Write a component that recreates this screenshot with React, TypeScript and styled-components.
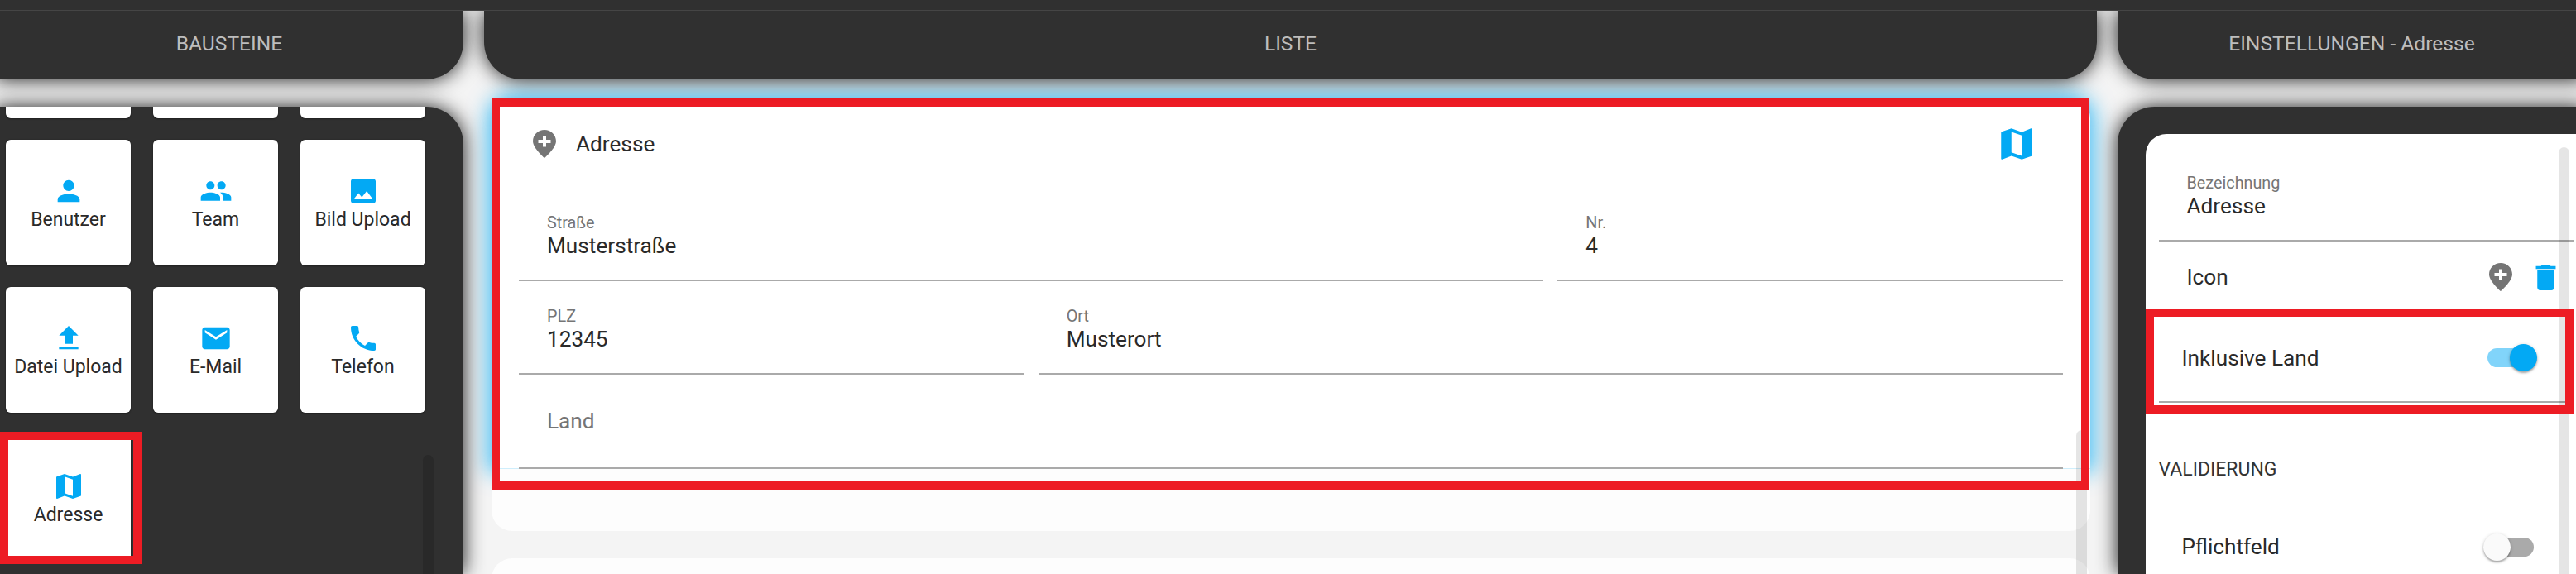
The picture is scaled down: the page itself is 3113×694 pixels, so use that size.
import React from "react";
import styled, { createGlobalStyle } from "styled-components";

const Global = createGlobalStyle`
  html, body { margin: 0; padding: 0; background: #f4f4f4; }
  body { font-family: Roboto, "Liberation Sans", sans-serif; font-size: 26.2px; font-weight: 400; color: #2a2a2a; }
  * { box-sizing: border-box; }
`;

const PATHS = {
  person: "M12 12c2.21 0 4-1.79 4-4s-1.79-4-4-4-4 1.79-4 4 1.79 4 4 4zm0 2c-2.67 0-8 1.34-8 4v2h16v-2c0-2.66-5.33-4-8-4z",
  group: "M16 11c1.66 0 2.99-1.34 2.99-3S17.66 5 16 5c-1.66 0-3 1.34-3 3s1.34 3 3 3zm-8 0c1.66 0 2.99-1.34 2.99-3S9.66 5 8 5C6.34 5 5 6.34 5 8s1.34 3 3 3zm0 2c-2.33 0-7 1.17-7 3.5V19h14v-2.5c0-2.33-4.67-3.5-7-3.5zm8 0c-.29 0-.62.02-.97.05 1.16.84 1.97 1.97 1.97 3.45V19h6v-2.5c0-2.33-4.67-3.5-7-3.5z",
  image: "M21 19V5c0-1.1-.9-2-2-2H5c-1.1 0-2 .9-2 2v14c0 1.1.9 2 2 2h14c1.1 0 2-.9 2-2zM8.5 13.5l2.5 3.01L14.5 12l4.5 6H5l3.5-4.5z",
  upload: "M9 16h6v-6h4l-7-7-7 7h4zm-4 2h14v2H5z",
  mail: "M20 4H4c-1.1 0-1.99.9-1.99 2L2 18c0 1.1.9 2 2 2h16c1.1 0 2-.9 2-2V6c0-1.1-.9-2-2-2zm0 4l-8 5-8-5V6l8 5 8-5v2z",
  phone: "M6.62 10.79c1.44 2.83 3.76 5.14 6.59 6.59l2.2-2.2c.27-.27.67-.36 1.02-.24 1.12.37 2.33.57 3.57.57.55 0 1 .45 1 1V20c0 .55-.45 1-1 1-9.39 0-17-7.61-17-17 0-.55.45-1 1-1h3.5c.55 0 1 .45 1 1 0 1.25.2 2.45.57 3.57.11.35.03.74-.25 1.02l-2.2 2.2z",
  map: "M20.5 3l-.16.03L15 5.1 9 3 3.36 4.9c-.21.07-.36.25-.36.48V20.5c0 .28.22.5.5.5l.16-.03L9 18.9l6 2.1 5.64-1.9c.21-.07.36-.25.36-.48V3.5c0-.28-.22-.5-.5-.5zM15 19l-6-2.11V5l6 2.11V19z",
  trash: "M6 19c0 1.1.9 2 2 2h8c1.1 0 2-.9 2-2V7H6v12zM19 4h-3.5l-1-1h-5l-1 1H5v2h14V4z",
};

const Svg = styled.svg<{ $size: number }>`
  display: block;
  flex: none;
  width: ${(p) => p.$size}px;
  height: ${(p) => p.$size}px;
  fill: #03a9f4;
`;

const Icon = ({ name, size = 40 }: { name: keyof typeof PATHS; size?: number }) => (
  <Svg $size={size} viewBox="0 0 24 24"><path d={PATHS[name]} /></Svg>
);

const PinSvg = styled.svg`
  display: block;
  flex: none;
  width: 28px;
  height: 34px;
  fill: #757575;
`;

const Pin = () => (
  <PinSvg viewBox="0 0 28 34">
    <path
      fillRule="evenodd"
      d="M14 0C6.3 0 0 6.1 0 13.7 0 22 14 34 14 34s14-12 14-20.3C28 6.1 21.7 0 14 0zM21.5 16H16v4.500h-4V16H6.500v-4H12V7.500h4V12h5.500z"
    />
  </PinSvg>
);

const Page = styled.div`
  position: relative;
  width: 3113px;
  height: 694px;
  overflow: hidden;
  background: #f4f4f4;
`;

const TopBar = styled.div`
  position: relative;
  z-index: 3;
  height: 13px;
  background: #303030;
  border-bottom: 1px solid #454545;
`;

const Columns = styled.div`
  display: grid;
  grid-template-columns: 566px 1949px 566px;
  column-gap: 25px;
  width: 3125px;
  margin-left: -6px;
`;

const Column = styled.div`
  display: flex;
  flex-direction: column;
  height: 681px;
`;

const SHADOW = "0 0 25px rgba(0, 0, 0, 0.9)";

const Header = styled.div<{ $corners: string }>`
  position: relative;
  z-index: 2;
  flex: none;
  height: 83px;
  display: flex;
  align-items: center;
  justify-content: center;
  padding-bottom: 4px;
  background: #303030;
  color: #bdbdbd;
  font-size: 24.6px;
  border-radius: ${(p) => p.$corners};
  box-shadow: ${SHADOW};
`;

const Panel = styled.div<{ $corners: string }>`
  position: relative;
  z-index: 2;
  flex: 1;
  min-height: 0;
  margin-top: 33px;
  background: #303030;
  border-radius: ${(p) => p.$corners};
  box-shadow: ${SHADOW};
`;

const Clip = styled.div`
  height: 100%;
  overflow: hidden;
  border-radius: inherit;
`;

const Tiles = styled.div`
  display: grid;
  grid-template-columns: repeat(3, 151px);
  grid-auto-rows: 152px;
  column-gap: 27px;
  row-gap: 26.3px;
  margin: -138.300px 0 0 13px;
`;

const Tile = styled.div`
  position: relative;
  display: flex;
  flex-direction: column;
  align-items: center;
  justify-content: center;
  background: #fff;
  border-radius: 6px;
  box-shadow: 0 1px 2px rgba(0, 0, 0, 0.3), 0 0 2px rgba(0, 0, 0, 0.2);
  font-size: 23px;
`;

const TileText = styled.div`
  margin-top: 1px;
  line-height: 27px;
`;

const Scroll = styled.div<{ $left: number; $top: number; $color: string }>`
  position: absolute;
  left: ${(p) => p.$left}px;
  top: ${(p) => p.$top}px;
  bottom: 0;
  width: 13px;
  border-radius: 7px 7px 0 0;
  background: ${(p) => p.$color};
`;

const Mark = styled.div<{ $l: number; $t: number; $w: number; $h: number }>`
  position: absolute;
  z-index: 5;
  left: ${(p) => p.$l}px;
  top: ${(p) => p.$t}px;
  width: ${(p) => p.$w}px;
  height: ${(p) => p.$h}px;
  border: 10px solid #ed1c24;
  pointer-events: none;
`;

const List = styled.div`
  position: relative;
  z-index: 1;
  flex: 1;
  padding: 22px 8px 0 9px;
`;

const Block = styled.div`
  position: relative;
  height: 449px;
  padding: 0 33px;
  background: #fff;
  border-radius: 25px 25px 0 0;
  border-bottom: 1px solid #cfeefc;
  box-shadow: 0 0 26px 4px rgba(3, 169, 244, 0.75);
`;

const TitleRow = styled.div`
  display: flex;
  align-items: center;
  height: 108px;
  padding: 4px 31px 0 17px;
`;

const Title = styled.span`
  flex: 1;
  margin-left: 24px;
`;

const Rows = styled.div`
  display: grid;
  grid-template-columns: repeat(3, 1fr);
  grid-auto-rows: 113.500px;
  column-gap: 17px;
`;

const Field = styled.div<{ $span: number }>`
  grid-column: span ${(p) => p.$span};
  display: flex;
  flex-direction: column;
  justify-content: flex-end;
  padding: 0 34px 26px;
  border-bottom: 2px solid #aaa;
`;

const Label = styled.div`
  font-size: 19.8px;
  line-height: 24px;
  color: #757575;
`;

const Value = styled.div<{ $empty?: boolean }>`
  line-height: 30px;
  color: ${(p) => (p.$empty ? "#757575" : "#2a2a2a")};
  margin-bottom: ${(p) => (p.$empty ? "15px" : "0")};
`;

const Foot = styled.div`
  position: relative;
  height: 75px;
  background: #fdfdfd;
  border-radius: 0 0 25px 25px;
`;

const NextCard = styled.div`
  height: 100px;
  margin-top: 33px;
  background: #fdfdfd;
  border-radius: 25px 25px 0 0;
`;

const SettingsCard = styled.div`
  position: relative;
  height: 100%;
  margin: 33px 0 0 33.500px;
  padding: 0 15.500px 0 16px;
  background: #fff;
  border-radius: 25px 0 0 0;
`;

const SettingsField = styled.div`
  height: 130px;
  display: flex;
  flex-direction: column;
  justify-content: flex-end;
  padding: 0 34px 26px;
  border-bottom: 2px solid #aaa;
`;

const IconRow = styled.div`
  height: 86px;
  display: flex;
  align-items: center;
  gap: 19.500px;
  padding: 0 13px 0 34px;
`;

const Grow = styled.span`
  flex: 1;
`;

const ToggleRow = styled.div<{ $line?: boolean }>`
  position: relative;
  display: flex;
  align-items: center;
  justify-content: space-between;
  height: ${(p) => (p.$line ? "109px" : "60px")};
  padding: ${(p) => (p.$line ? "2px" : "0")} 47.500px 0 28px;
  border-bottom: ${(p) => (p.$line ? "2px solid #aaa" : "none")};
`;

const Track = styled.div<{ $on: boolean }>`
  position: relative;
  width: 56px;
  height: 23px;
  border-radius: 12px;
  background: ${(p) => (p.$on ? "#81d4fa" : "#aaaaaa")};
`;

const Thumb = styled.div<{ $on: boolean }>`
  position: absolute;
  top: -5px;
  left: ${(p) => (p.$on ? "27px" : "-5px")};
  width: 33px;
  height: 33px;
  border-radius: 50%;
  background: ${(p) => (p.$on ? "#03a9f4" : "#fafafa")};
  box-shadow: 0 2px 2px rgba(0, 0, 0, 0.24), 0 1px 4px rgba(0, 0, 0, 0.2);
`;

const Section = styled.div`
  margin: 66px 0 48px;
  font-size: 23px;
  line-height: 30px;
  color: #333;
`;

const tiles: [keyof typeof PATHS, string][] = [
  ["person", "Benutzer"],
  ["group", "Team"],
  ["image", "Bild Upload"],
  ["upload", "Datei Upload"],
  ["mail", "E-Mail"],
  ["phone", "Telefon"],
];

const Toggle = ({ on }: { on: boolean }) => (
  <Track $on={on}><Thumb $on={on} /></Track>
);

export default function App() {
  return (
    <Page>
      <Global />
      <TopBar />
      <Columns>
        <Column>
          <Header $corners="0 0 45px 0">BAUSTEINE</Header>
          <Panel $corners="0 45px 0 0">
            <Clip>
              <Tiles>
                <Tile /><Tile /><Tile />
                {tiles.map(([icon, text]) => (
                  <Tile key={text}><Icon name={icon} /><TileText>{text}</TileText></Tile>
                ))}
                <Tile>
                  <Icon name="map" /><TileText>Adresse</TileText>
                  <Mark $l={-7} $t={-3.3} $w={171} $h={160} />
                </Tile>
              </Tiles>
            </Clip>
            <Scroll $left={517} $top={421} $color="#292929" />
          </Panel>
        </Column>

        <Column>
          <Header $corners="0 0 45px 45px">LISTE</Header>
          <List>
            <Block>
              <TitleRow>
                <Pin />
                <Title>Adresse</Title>
                <Icon name="map" size={50} />
              </TitleRow>
              <Rows>
                <Field $span={2}><Label>Straße</Label><Value>Musterstraße</Value></Field>
                <Field $span={1}><Label>Nr.</Label><Value>4</Value></Field>
                <Field $span={1}><Label>PLZ</Label><Value>12345</Value></Field>
                <Field $span={2}><Label>Ort</Label><Value>Musterort</Value></Field>
                <Field $span={3}><Value $empty>Land</Value></Field>
              </Rows>
              <Mark $l={0} $t={1} $w={1931} $h={472.7} />
            </Block>
            <Foot />
            <NextCard />
            <Scroll $left={1924} $top={424} $color="rgba(0, 0, 0, 0.1)" />
          </List>
        </Column>

        <Column>
          <Header $corners="0 0 0 45px">EINSTELLUNGEN - Adresse</Header>
          <Panel $corners="45px 0 0 0">
            <SettingsCard>
              <SettingsField><Label>Bezeichnung</Label><Value>Adresse</Value></SettingsField>
              <IconRow><Grow>Icon</Grow><Pin /><Icon name="trash" size={41} /></IconRow>
              <ToggleRow $line>
                <span>Inklusive Land</span>
                <Toggle on />
                <Mark $l={-16} $t={-5} $w={517.5} $h={127} />
              </ToggleRow>
              <Section>VALIDIERUNG</Section>
              <ToggleRow><span>Pflichtfeld</span><Toggle on={false} /></ToggleRow>
              <Scroll $left={499.5} $top={16} $color="rgba(0, 0, 0, 0.1)" />
            </SettingsCard>
          </Panel>
        </Column>
      </Columns>
    </Page>
  );
}
